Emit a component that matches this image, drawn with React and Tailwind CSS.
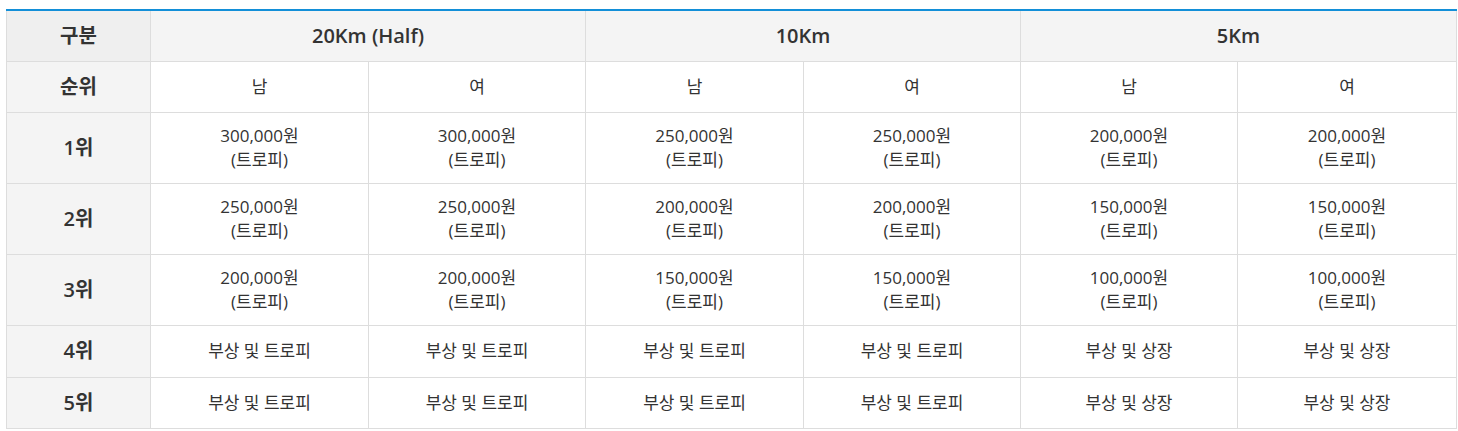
import React from 'react';

const prizes = [
    { rank: '1위', values: ['300,000원', '300,000원', '250,000원', '250,000원', '200,000원', '200,000원'] },
    { rank: '2위', values: ['250,000원', '250,000원', '200,000원', '200,000원', '150,000원', '150,000원'] },
    { rank: '3위', values: ['200,000원', '200,000원', '150,000원', '150,000원', '100,000원', '100,000원'] },
];

const extras = [
    { rank: '4위', values: ['부상 및 트로피', '부상 및 트로피', '부상 및 트로피', '부상 및 트로피', '부상 및 상장', '부상 및 상장'] },
    { rank: '5위', values: ['부상 및 트로피', '부상 및 트로피', '부상 및 트로피', '부상 및 트로피', '부상 및 상장', '부상 및 상장'] },
];

const cell = 'border border-[#dddddd] text-center align-middle';
const head = 'text-[20px] font-semibold';

export default function App() {
    return (
        <div className="bg-white pl-[6px] pr-[2px] pt-[9px] text-[#333333]" style={{ fontFamily: '"Open Sans", "Noto Sans CJK KR", sans-serif' }}>
            <table className="w-[1450px] table-fixed border-collapse border-t-2 border-t-[#138fd8] text-[17px] leading-[24px]">
                <colgroup>
                    <col className="w-[144px]" />
                    <col className="w-[218px]" />
                    <col className="w-[217px]" />
                    <col className="w-[218px]" />
                    <col className="w-[217px]" />
                    <col className="w-[217px]" />
                    <col className="w-[219px]" />
                </colgroup>
                <thead>
                    <tr className="h-[51px]">
                        <th className={`${cell} border-t-0 bg-[#efefef] ${head}`}>구분</th>
                        <th colSpan={2} className={`${cell} border-t-0 bg-[#f4f4f4] ${head}`}>20Km (Half)</th>
                        <th colSpan={2} className={`${cell} border-t-0 bg-[#f4f4f4] ${head}`}>10Km</th>
                        <th colSpan={2} className={`${cell} border-t-0 bg-[#f4f4f4] ${head}`}>5Km</th>
                    </tr>
                    <tr className="h-[51px]">
                        <th className={`${cell} bg-[#f4f4f4] ${head}`}>순위</th>
                        {['남', '여', '남', '여', '남', '여'].map((g, i) => (
                            <td key={i} className={`${cell} font-normal`}>{g}</td>
                        ))}
                    </tr>
                </thead>
                <tbody>
                    {prizes.map((row) => (
                        <tr key={row.rank} className="h-[71px]">
                            <th className={`${cell} bg-[#f4f4f4] ${head}`}>{row.rank}</th>
                            {row.values.map((v, i) => (
                                <td key={i} className={cell}>
                                    {v}
                                    <br />
                                    (트로피)
                                </td>
                            ))}
                        </tr>
                    ))}
                    {extras.map((row, idx) => (
                        <tr key={row.rank} className={idx === 0 ? 'h-[52px]' : 'h-[51px]'}>
                            <th className={`${cell} bg-[#f4f4f4] ${head}`}>{row.rank}</th>
                            {row.values.map((v, i) => (
                                <td key={i} className={cell}>{v}</td>
                            ))}
                        </tr>
                    ))}
                </tbody>
            </table>
        </div>
    );
}
